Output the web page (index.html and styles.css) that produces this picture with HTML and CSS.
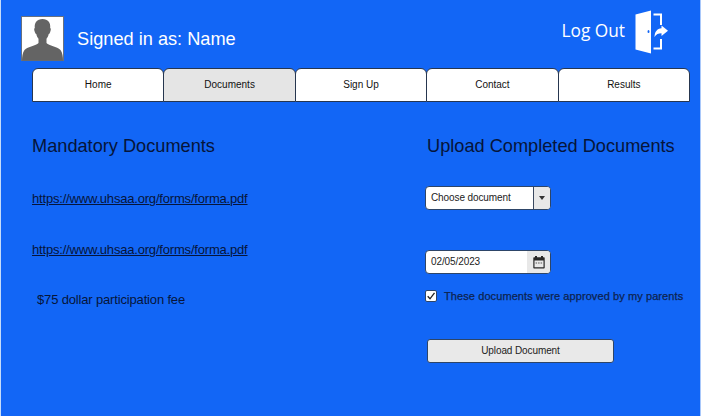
FILE: index.html
```html
<!DOCTYPE html>
<html lang="en">
<head>
<meta charset="utf-8">
<title>Documents</title>
<link rel="stylesheet" href="styles.css">
</head>
<body>
<div class="page">
  <header class="header">
    <svg class="avatar" viewBox="0 0 43 45">
      <rect x=".5" y=".5" width="42" height="44" fill="#fff" stroke="#68717f"/>
      <path d="M21.500 3C16 3 13.300 6.500 13.800 12c-.9.2-.8 2 .2 4.500.4 1 .8 1.500 1.300 1.500.4 2 1.200 3.500 2.200 4.700v4.300C15 29.500 7 30.500 3.500 34 1.500 36.500 1 41 1 44.500h41c0-3.500-.5-8-2.500-10.500C36 30.500 28 29.500 25.500 27v-4.300c1-1.200 1.800-2.700 2.200-4.700.5 0 .9-.5 1.300-1.500 1-2.500 1.100-4.300.2-4.500.5-5.500-2.200-9-7.700-9z" fill="#646464"/>
    </svg>
    <span class="user">Signed in as: Name</span>
    <a class="logout"><span>Log Out</span>
      <svg class="door" viewBox="0 0 34 44">
        <path fill="#fff" fill-rule="evenodd" d="M.5 4.500 16 .5v43L.5 39.500zM13.500 20a1 1.500 0 1 0 0 3 1 1.500 0 0 0 0-3z"/>
        <path fill="none" stroke="#fff" stroke-width="2" d="M18.500 4.500h7.500V15M18.500 38.500h7.500V29"/>
        <path fill="#fff" d="M19.500 27c.2-5 2.500-8.300 7-8.700V15.500l6.500 5.200-6.500 5.300v-2.800c-3.200 0-5.200 1-7 3.800z"/>
      </svg>
    </a>
  </header>
  <nav class="tabs">
    <a class="tab">Home</a><a class="tab active">Documents</a><a class="tab">Sign Up</a><a class="tab">Contact</a><a class="tab">Results</a>
  </nav>
  <main class="content">
    <section class="mandatory">
      <h2 class="title">Mandatory Documents</h2>
      <a class="link">https://www.uhsaa.org/forms/forma.pdf</a>
      <a class="link">https://www.uhsaa.org/forms/forma.pdf</a>
      <p class="fee">$75 dollar participation fee</p>
    </section>
    <section class="upload">
      <h2 class="title upload-title">Upload Completed Documents</h2>
      <div class="field select"><span class="value">Choose document</span><span class="arrow"><svg viewBox="0 0 6 4" width="6" height="4"><path d="M0 0h6L3 4z" fill="#333"/></svg></span></div>
      <div class="field date"><span class="value">02/05/2023</span><span class="picker"><svg viewBox="0 0 12 13" width="12" height="13"><path fill="#282828" fill-rule="evenodd" d="M2 0h2v1.200h4V0h2v1.200h1q.7 0 .7.700v9.800q0 .8-.8.800H1.100q-.8 0-.8-.8V1.900q0-.7.700-.7h1zM1.500 4.500v6.800h9V4.500z"/><path stroke="#555" stroke-width="1.200" stroke-dasharray="1.500 1" d="M2.600 7h7"/></svg></span></div>
      <label class="approval"><span class="box"><svg viewBox="0 0 10 10" width="10" height="10"><path d="M1.700 5.300 4 7.800 8.500 1.800" fill="none" stroke="#222" stroke-width="1.300"/></svg></span><span class="approval-text">These documents were approved by my parents</span></label>
      <button class="submit">Upload Document</button>
    </section>
  </main>
</div>
</body>
</html>
```

FILE: styles.css
```css
* { box-sizing: border-box; }
body { margin: 0; font-family: "Liberation Sans", Arial, sans-serif; }
.page { width: 701px; height: 416px; overflow: hidden; background: #1266f6; border-left: 1px solid #c5dcfa; border-right: 1px solid #a9c8fa; }
.header { height: 68px; display: flex; align-items: flex-start; padding-left: 20px; }
.avatar { width: 43px; height: 45px; margin-top: 16px; }
.user { margin: 28px 0 0 13px; font-size: 18.2px; line-height: 22px; color: #fff; white-space: nowrap; }
.logout { margin: 10px 31px 0 auto; display: flex; color: #fff; font: 17.3px/22px "Open Sans", sans-serif; }
.logout span { margin: 10px 10px 0 0; }
.door { width: 34px; height: 44px; }
.tabs { width: 658px; height: 34px; margin-left: 31px; display: flex; }
.tab { flex: 1; margin-right: -1px; border: 1px solid #26364f; border-radius: 6px 6px 0 0; background: #fff; color: #111; font-size: 10px; line-height: 31px; text-align: center; }
.tab:last-child { margin-right: 0; }
.active { background: #e5e5e5; }
.content { display: flex; padding: 33px 0 0 31px; color: #06153a; }
.mandatory { width: 393px; display: flex; flex-direction: column; align-items: flex-start; }
.upload { display: flex; flex-direction: column; align-items: flex-start; }
.title { margin: 0; font-size: 18.2px; line-height: 22px; font-weight: 400; white-space: nowrap; }
.upload-title { margin-left: 2px; }
.link { margin-top: 33px; font-size: 13px; line-height: 18px; letter-spacing: -.19px; text-decoration: underline; }
.fee { margin: 32px 0 0 5px; font-size: 13px; line-height: 18px; letter-spacing: -.16px; }
.field { width: 126px; height: 24px; display: flex; border: 1px solid #2d4568; border-radius: 4px; background: #fff; overflow: hidden; color: #222; font-size: 10px; line-height: 22px; }
.value { flex: 1; padding-left: 5px; }
.select { margin-top: 29px; }
.select .value { letter-spacing: -.1px; }
.date { margin-top: 40px; }
.date .value { line-height: 21px; letter-spacing: -.1px; }
.arrow, .picker { display: flex; align-items: center; justify-content: center; background: #e8e8e8; }
.arrow { width: 17px; border-left: 1px solid #39485f; }
.picker { width: 23px; }
.approval { margin-top: 15px; display: flex; align-items: center; gap: 7px; height: 14px; color: #0d2350; font-size: 11px; letter-spacing: .09px; white-space: nowrap; }
.approval-text { -webkit-text-stroke: .25px currentColor; }
.box { width: 12px; height: 12px; display: flex; background: #fff; border: 1px solid #2d4568; border-radius: 2px; }
.submit { width: 187px; height: 24px; margin: 36px 0 0 2px; padding: 0; border: 1px solid #2d4568; border-radius: 3px; background: #e9e9e9; color: #222; font: 10px/22px "Liberation Sans", Arial, sans-serif; letter-spacing: -.1px; }
```
